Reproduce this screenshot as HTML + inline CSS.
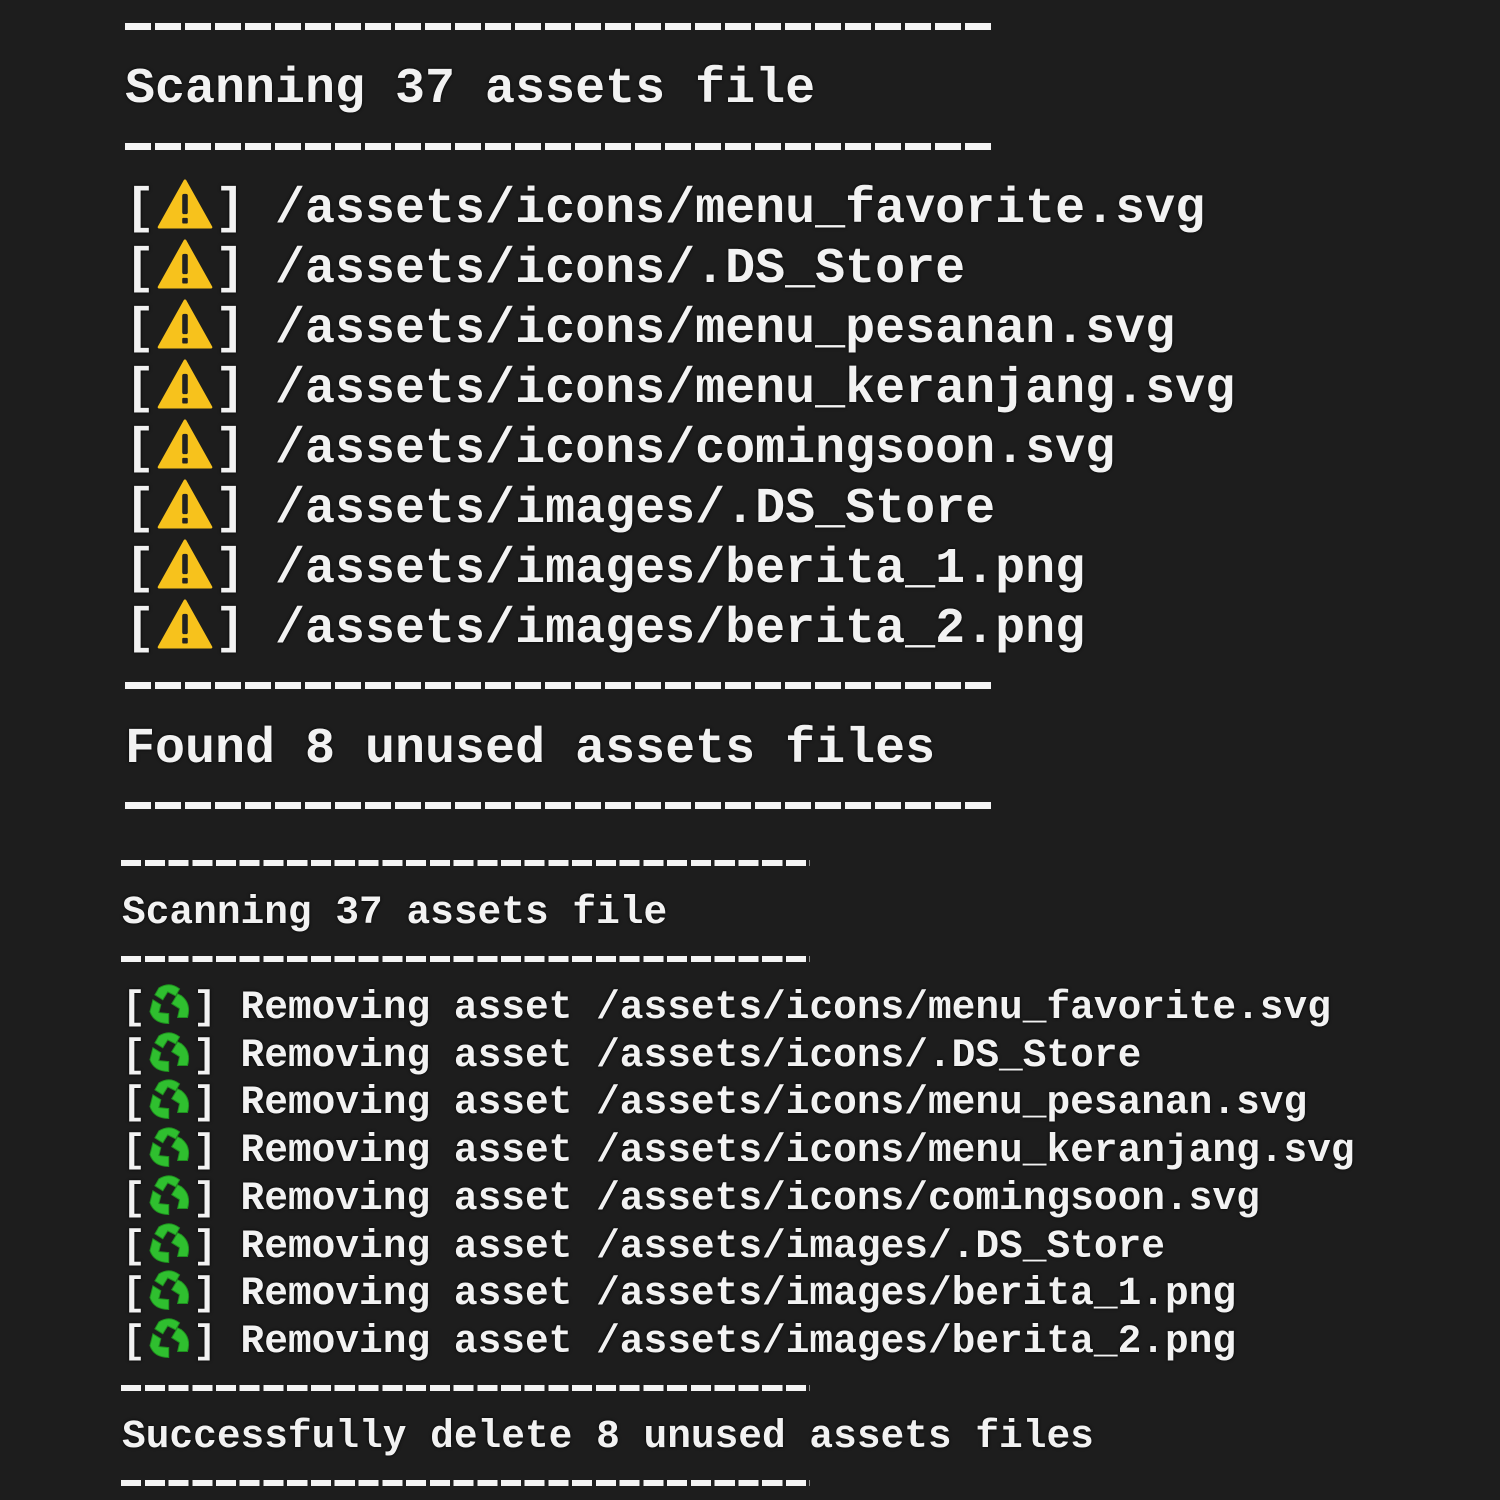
<!DOCTYPE html>
<html><head><meta charset="utf-8"><style>
html,body{margin:0;padding:0;background:#1d1d1d;width:1500px;height:1500px;overflow:hidden}
.l{position:absolute;white-space:pre;font-family:"Liberation Mono","DejaVu Sans Mono",monospace;font-weight:bold;color:#f2f2f2;text-shadow:0 0 3px #000}
.t{font-size:50px;line-height:60px;left:125px}
.b{font-size:39.5px;line-height:48px;left:122px}
.d{position:absolute;height:7px;background:repeating-linear-gradient(90deg,#f4f4f4 0 26px,transparent 26px 30px);width:870px;left:125px}
.db{position:absolute;height:6px;background:repeating-linear-gradient(90deg,#f4f4f4 0 20px,transparent 20px 23.75px);width:689px;left:121px}
.e{display:inline-block;width:2ch;height:1em;vertical-align:middle;position:relative;top:-0.1em}
.r{height:1.15em;top:-0.08em}
.e svg{width:100%;height:100%;display:block}
</style></head><body>
<svg width="0" height="0" style="position:absolute">
<symbol id="w" viewBox="0 0 60 54"><path d="M30 2 L58 52 L2 52 Z" fill="#f7c21c" stroke="#f7c21c" stroke-width="3" stroke-linejoin="round"/><rect x="27" y="16" width="6" height="22" rx="2" fill="#222"/><rect x="27" y="42" width="6" height="6" rx="1" fill="#222"/></symbol>
<symbol id="g" viewBox="0 0 48 46"><g fill="#2fbf2f" stroke="#1f8f1f" stroke-width="1"><path d="M13 6 Q24 -1 34 7 L30 14 L22 10 L17 18 L9 13 Z"/><path d="M36 14 Q46 22 42 36 L32 36 L34 27 L26 22 L32 12 Z"/><path d="M7 18 L15 23 L13 31 L23 32 L23 42 Q8 42 4 30 Z"/></g></symbol>
</svg>
<div class="d" style="top:23px"></div>
<div class="l t" style="top:60px">Scanning 37 assets file</div>
<div class="d" style="top:143px"></div>

<div class="l t" style="top:180px">[<span class="e"><svg><use href="#w"/></svg></span>] /assets/icons/menu_favorite.svg</div>
<div class="l t" style="top:240px">[<span class="e"><svg><use href="#w"/></svg></span>] /assets/icons/.DS_Store</div>
<div class="l t" style="top:300px">[<span class="e"><svg><use href="#w"/></svg></span>] /assets/icons/menu_pesanan.svg</div>
<div class="l t" style="top:360px">[<span class="e"><svg><use href="#w"/></svg></span>] /assets/icons/menu_keranjang.svg</div>
<div class="l t" style="top:420px">[<span class="e"><svg><use href="#w"/></svg></span>] /assets/icons/comingsoon.svg</div>
<div class="l t" style="top:480px">[<span class="e"><svg><use href="#w"/></svg></span>] /assets/images/.DS_Store</div>
<div class="l t" style="top:540px">[<span class="e"><svg><use href="#w"/></svg></span>] /assets/images/berita_1.png</div>
<div class="l t" style="top:600px">[<span class="e"><svg><use href="#w"/></svg></span>] /assets/images/berita_2.png</div>

<div class="d" style="top:682px"></div>
<div class="l t" style="top:720px">Found 8 unused assets files</div>
<div class="d" style="top:802px"></div>

<div class="db" style="top:860px"></div>
<div class="l b" style="top:889px">Scanning 37 assets file</div>
<div class="db" style="top:956px"></div>

<div class="l b" style="top:984px">[<span class="e r"><svg><use href="#g"/></svg></span>] Removing asset /assets/icons/menu_favorite.svg</div>
<div class="l b" style="top:1032px">[<span class="e r"><svg><use href="#g"/></svg></span>] Removing asset /assets/icons/.DS_Store</div>
<div class="l b" style="top:1079px">[<span class="e r"><svg><use href="#g"/></svg></span>] Removing asset /assets/icons/menu_pesanan.svg</div>
<div class="l b" style="top:1127px">[<span class="e r"><svg><use href="#g"/></svg></span>] Removing asset /assets/icons/menu_keranjang.svg</div>
<div class="l b" style="top:1175px">[<span class="e r"><svg><use href="#g"/></svg></span>] Removing asset /assets/icons/comingsoon.svg</div>
<div class="l b" style="top:1223px">[<span class="e r"><svg><use href="#g"/></svg></span>] Removing asset /assets/images/.DS_Store</div>
<div class="l b" style="top:1270px">[<span class="e r"><svg><use href="#g"/></svg></span>] Removing asset /assets/images/berita_1.png</div>
<div class="l b" style="top:1318px">[<span class="e r"><svg><use href="#g"/></svg></span>] Removing asset /assets/images/berita_2.png</div>

<div class="db" style="top:1385px"></div>
<div class="l b" style="top:1413px">Successfully delete 8 unused assets files</div>
<div class="db" style="top:1480px"></div>
</body></html>
